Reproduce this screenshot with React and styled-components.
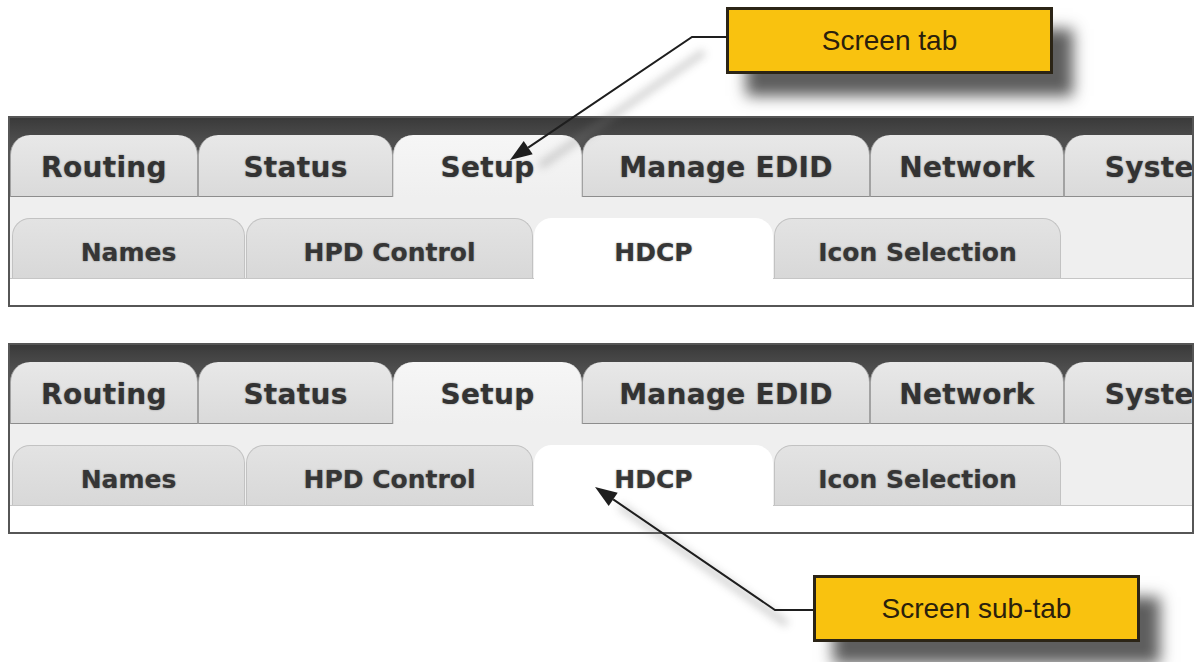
import React from 'react';
import styled, { createGlobalStyle } from 'styled-components';

const GlobalStyle = createGlobalStyle`
  html, body {
    margin: 0;
    padding: 0;
    background: #ffffff;
  }
  * {
    box-sizing: border-box;
  }
`;

const Page = styled.div`
  position: relative;
  width: 1196px;
  height: 662px;
  padding-top: 7px;
  overflow: hidden;
  background: #ffffff;
`;

const Callout = styled.div`
  width: 327px;
  height: 67px;
  margin-left: ${props => props.$left}px;
  margin-top: ${props => props.$top || 0}px;
  display: flex;
  align-items: center;
  justify-content: center;
  background: #f9c20f;
  border: 3px solid #2b2416;
  box-shadow: 20px 22px 14px rgba(40, 40, 40, 0.75);
  font-family: "Liberation Sans", Arial, sans-serif;
  font-size: 28px;
  color: #2a200c;
`;

const Panel = styled.div`
  width: 1186px;
  height: 191px;
  margin-left: 8px;
  margin-top: ${props => props.$top}px;
  display: flex;
  flex-direction: column;
  border: 2px solid #565656;
  background: #ffffff;
  overflow: hidden;
`;

const TabBar = styled.div`
  display: flex;
  align-items: flex-end;
  flex-shrink: 0;
  height: 79px;
  padding-top: 17px;
  background: linear-gradient(#3a3a3a 0%, #4e4e4e 30%, #606060 100%);
`;

const Tab = styled.div`
  flex-shrink: 0;
  width: ${props => props.$w}px;
  height: 62px;
  display: flex;
  align-items: center;
  justify-content: center;
  padding-top: 3px;
  border-radius: 20px 20px 0 0;
  border-left: 1px solid ${props => (props.$active ? '#d8d8d8' : '#a2a2a2')};
  border-right: 1px solid ${props => (props.$active ? '#d8d8d8' : '#a2a2a2')};
  border-bottom: ${props => (props.$active ? 'none' : '1px solid #8d8d8d')};
  background: ${props =>
    props.$active
      ? 'linear-gradient(#f6f6f6, #efefef)'
      : 'linear-gradient(#e8e8e8, #dadada)'};
  font-family: "DejaVu Sans", Verdana, sans-serif;
  font-weight: bold;
  font-size: 28px;
  letter-spacing: 0.3px;
  color: #333333;
  text-shadow: 0 0 2px rgba(0, 0, 0, 0.4);
  white-space: nowrap;
`;

const SubBar = styled.div`
  display: flex;
  align-items: flex-end;
  gap: 1px;
  flex-shrink: 0;
  height: 82px;
  padding-top: 21px;
  padding-left: 2px;
  background: #efefef;
  border-bottom: 1px solid #c6c6c6;
`;

const SubTab = styled.div`
  flex-shrink: 0;
  width: ${props => props.$w}px;
  height: ${props => (props.$active ? 61 : 60)}px;
  margin-bottom: ${props => (props.$active ? -1 : 0)}px;
  display: flex;
  align-items: center;
  justify-content: center;
  padding-top: 7px;
  border-radius: 18px 18px 0 0;
  border: ${props => (props.$active ? 'none' : '1px solid #c2c2c2')};
  border-bottom: none;
  background: ${props =>
    props.$active ? '#ffffff' : 'linear-gradient(#e3e3e3, #d8d8d8)'};
  font-family: "DejaVu Sans", Verdana, sans-serif;
  font-weight: bold;
  font-size: 25px;
  color: #363636;
  text-shadow: 0 0 2px rgba(0, 0, 0, 0.4);
  white-space: nowrap;
`;

const PanelBody = styled.div`
  flex: 1;
  background: #ffffff;
`;

const Overlay = styled.svg`
  position: absolute;
  left: 0;
  top: 0;
  width: 1196px;
  height: 662px;
  pointer-events: none;
`;

const mainTabs = [
  { label: 'Routing', w: 188 },
  { label: 'Status', w: 195 },
  { label: 'Setup', w: 189, active: true },
  { label: 'Manage EDID', w: 288 },
  { label: 'Network', w: 194 },
  { label: 'System', w: 200 },
];

const subTabs = [
  { label: 'Names', w: 233 },
  { label: 'HPD Control', w: 287 },
  { label: 'HDCP', w: 239, active: true },
  { label: 'Icon Selection', w: 287 },
];

function TabPanel({ top }) {
  return (
    <Panel $top={top}>
      <TabBar>
        {mainTabs.map(t => (
          <Tab key={t.label} $w={t.w} $active={t.active}>
            {t.label}
          </Tab>
        ))}
      </TabBar>
      <SubBar>
        {subTabs.map(t => (
          <SubTab key={t.label} $w={t.w} $active={t.active}>
            {t.label}
          </SubTab>
        ))}
      </SubBar>
      <PanelBody />
    </Panel>
  );
}

// leader lines with arrow heads, drawn over the screenshots
function Arrows() {
  return (
    <Overlay viewBox="0 0 1196 662">
      <defs>
        <filter id="soft" x="-20%" y="-20%" width="140%" height="140%">
          <feGaussianBlur stdDeviation="4" />
        </filter>
      </defs>
      <g filter="url(#soft)" opacity="0.35">
        <polyline points="704,52 540,166" fill="none" stroke="#777" strokeWidth="7" />
        <polyline points="787,624 620,506" fill="none" stroke="#777" strokeWidth="7" />
      </g>
      <polyline
        points="727,37 692,37 528.2,147.7"
        fill="none"
        stroke="#1e1e1e"
        strokeWidth="2"
      />
      <polygon points="510,160 532.7,154.3 523.7,141.1" fill="#1e1e1e" />
      <polyline
        points="813,610 775,610 613.2,499.4"
        fill="none"
        stroke="#1e1e1e"
        strokeWidth="2"
      />
      <polygon points="595,487 617.7,492.8 608.7,506" fill="#1e1e1e" />
    </Overlay>
  );
}

export default function App() {
  return (
    <>
      <GlobalStyle />
      <Page>
        <Callout $left={726}>Screen tab</Callout>
        <TabPanel top={42} />
        <TabPanel top={36} />
        <Callout $left={813} $top={41}>Screen sub-tab</Callout>
        <Arrows />
      </Page>
    </>
  );
}
